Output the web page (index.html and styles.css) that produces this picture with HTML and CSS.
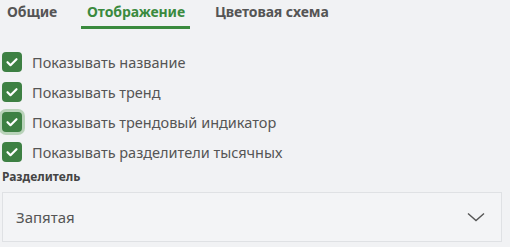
FILE: index.html
```html
<!DOCTYPE html>
<html lang="ru">
<head>
<meta charset="utf-8">
<link rel="stylesheet" href="styles.css">
</head>
<body>
<div class="panel">
  <div class="tabs">
    <div class="tab">Общие</div>
    <div class="tab active">Отображение</div>
    <div class="tab">Цветовая схема</div>
  </div>
  <div class="options">
    <label class="opt"><span class="box"><svg viewBox="0 0 20 20" width="20" height="20"><path d="M5.5 10.2l3 3 6-6" fill="none" stroke="#fff" stroke-width="2.2" stroke-linecap="round" stroke-linejoin="round"/></svg></span><span class="lbl">Показывать название</span></label>
    <label class="opt"><span class="box"><svg viewBox="0 0 20 20" width="20" height="20"><path d="M5.5 10.2l3 3 6-6" fill="none" stroke="#fff" stroke-width="2.2" stroke-linecap="round" stroke-linejoin="round"/></svg></span><span class="lbl">Показывать тренд</span></label>
    <label class="opt"><span class="box focus"><svg viewBox="0 0 20 20" width="20" height="20"><path d="M5.5 10.2l3 3 6-6" fill="none" stroke="#fff" stroke-width="2.2" stroke-linecap="round" stroke-linejoin="round"/></svg></span><span class="lbl">Показывать трендовый индикатор</span></label>
    <label class="opt"><span class="box"><svg viewBox="0 0 20 20" width="20" height="20"><path d="M5.5 10.2l3 3 6-6" fill="none" stroke="#fff" stroke-width="2.2" stroke-linecap="round" stroke-linejoin="round"/></svg></span><span class="lbl">Показывать разделители тысячных</span></label>
  </div>
  <div class="field-label">Разделитель</div>
  <div class="select">
    <span class="value">Запятая</span>
    <svg class="chev" viewBox="0 0 18 10" width="18" height="10"><path d="M1 1.5l8 7 8-7" fill="none" stroke="#555" stroke-width="1.4"/></svg>
  </div>
</div>
</body>
</html>
```
FILE: styles.css
```css
html, body {
  margin: 0;
  padding: 0;
  background: #f1f2f4;
}
body {
  font-family: "Noto Sans", "Open Sans", sans-serif;
  color: #555;
}
.panel {
  width: 510px;
  height: 247px;
  overflow: hidden;
}
.tabs {
  display: flex;
  padding-left: 7px;
  height: 29px;
}
.tab {
  font-size: 14px;
  font-weight: 700;
  color: #555;
  padding: 2px 0 0;
  margin-right: 30px;
  line-height: 20px;
  box-sizing: border-box;
  letter-spacing: -0.1px;
}
.tab.active {
  color: #3a8a3e;
  position: relative;
}
.tab.active::after {
  content: "";
  position: absolute;
  left: -6px;
  right: -5px;
  top: 26px;
  height: 3px;
  background: #3a8a3e;
}
.options {
  display: flex;
  flex-direction: column;
  padding-top: 23px;
  gap: 10px;
}
.opt {
  display: flex;
  align-items: center;
  height: 20px;
  padding-left: 2px;
}
.box {
  width: 20px;
  height: 20px;
  border-radius: 4px;
  background: #3d8043;
  display: flex;
  flex: none;
}
.box.focus {
  box-shadow: 0 0 0 3px #b9d3ba;
}
.lbl {
  margin-left: 10px;
  font-size: 14.5px;
  color: #555;
  line-height: 20px;
}
.field-label {
  margin-top: 7px;
  padding-left: 2px;
  font-size: 12px;
  font-weight: 700;
  color: #444;
  line-height: 16px;
}
.select {
  margin: 7px 0 0 2px;
  width: 500px;
  height: 50px;
  box-sizing: border-box;
  border: 1px solid #dfe1e4;
  background: #f3f4f6;
  display: flex;
  align-items: center;
  justify-content: space-between;
  padding: 0 16px 0 13px;
}
.value {
  font-size: 15px;
  color: #555;
}
.chev {
  display: block;
}
```
